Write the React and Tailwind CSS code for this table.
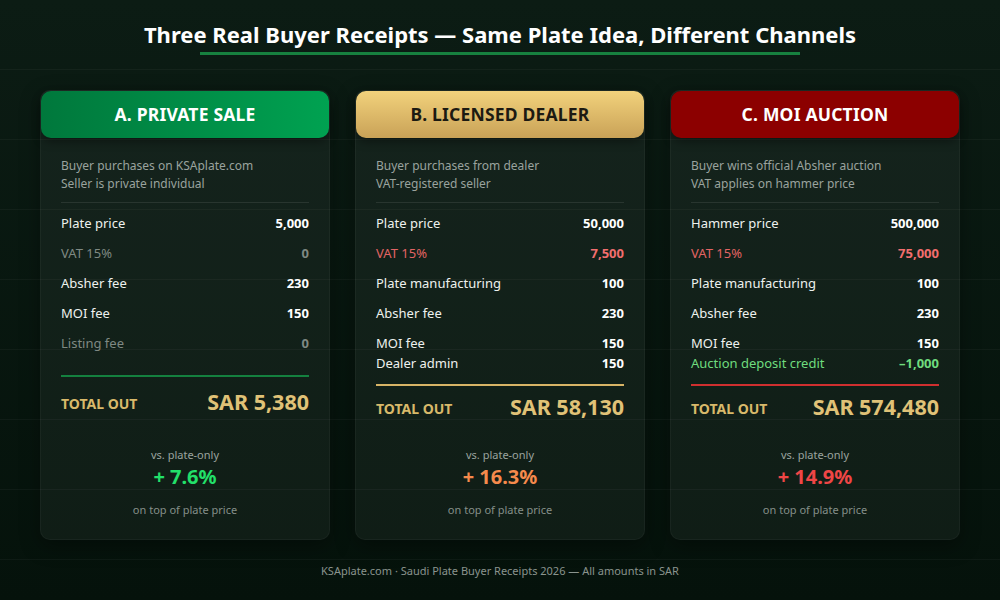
const cards = [
  {
    title: "A. PRIVATE SALE",
    head: "bg-linear-to-r from-[#00783c] to-[#00a251] text-white",
    desc: ["Buyer purchases on KSAplate.com", "Seller is private individual"],
    rows: [
      { label: "Plate price", value: "5,000" },
      { label: "VAT 15%", value: "0", tone: "muted" },
      { label: "Absher fee", value: "230" },
      { label: "MOI fee", value: "150" },
      { label: "Listing fee", value: "0", tone: "muted" },
    ],
    rule: "bg-[#14813f] mt-[16px]",
    totalGap: "mt-[9px]",
    total: "SAR 5,380",
    pct: "+ 7.6%",
    pctColor: "text-[#22e06a]",
  },
  {
    title: "B. LICENSED DEALER",
    head: "bg-linear-to-b from-[#f2d27c] to-[#c9a257] text-[#1c1a12]",
    desc: ["Buyer purchases from dealer", "VAT-registered seller"],
    rows: [
      { label: "Plate price", value: "50,000" },
      { label: "VAT 15%", value: "7,500", tone: "red" },
      { label: "Plate manufacturing", value: "100" },
      { label: "Absher fee", value: "230" },
      { label: "MOI fee", value: "150", tight: true, first: true },
      { label: "Dealer admin", value: "150", tight: true },
    ],
    rule: "bg-[#d7b466] mt-[10px]",
    totalGap: "mt-[5px]",
    total: "SAR 58,130",
    pct: "+ 16.3%",
    pctColor: "text-[#f58a4c]",
  },
  {
    title: "C. MOI AUCTION",
    head: "bg-[#8c0000] text-white",
    desc: ["Buyer wins official Absher auction", "VAT applies on hammer price"],
    rows: [
      { label: "Hammer price", value: "500,000" },
      { label: "VAT 15%", value: "75,000", tone: "red" },
      { label: "Plate manufacturing", value: "100" },
      { label: "Absher fee", value: "230" },
      { label: "MOI fee", value: "150", tight: true, first: true },
      { label: "Auction deposit credit", value: "–1,000", tone: "green", tight: true },
    ],
    rule: "bg-[#cf2f2f] mt-[10px]",
    totalGap: "mt-[5px]",
    total: "SAR 574,480",
    pct: "+ 14.9%",
    pctColor: "text-[#f04646]",
  },
];

const labelTone = {
  muted: "text-[#7f8983]",
  red: "text-[#e26464]",
  green: "text-[#6fdc7e]",
};

const valueTone = {
  muted: "text-[#7f8983]",
  red: "text-[#f26e6e]",
  green: "text-[#6fdc7e]",
};

function Row({ row }) {
  const h = row.tight ? "h-[20px]" : "h-[30px]";
  const mt = row.first ? "mt-[5px]" : "";
  return (
    <div className={`flex items-center justify-between text-[13px] ${h} ${mt}`}>
      <span className={labelTone[row.tone] || "text-[#eef1ee]"}>{row.label}</span>
      <span className={`font-bold ${valueTone[row.tone] || "text-white"}`}>{row.value}</span>
    </div>
  );
}

function Card({ c }) {
  return (
    <div className="flex flex-col w-[290px] h-[450px] rounded-[10px] bg-white/[0.045] border border-white/[0.04] shadow-[0_6px_20px_rgba(0,0,0,0.35)]">
      <div className={`h-[47px] shrink-0 flex items-center justify-center rounded-[10px] text-[17.5px] font-bold tracking-[0.2px] shadow-[0_4px_10px_rgba(0,0,0,0.35)] ${c.head}`}>
        {c.title}
      </div>
      <div className="flex flex-col flex-1 px-5 pt-[19px] pb-[21px]">
        <div className="text-[12px] leading-[18px] text-[#9aa39e]">
          <div>{c.desc[0]}</div>
          <div>{c.desc[1]}</div>
        </div>
        <div className="h-px bg-white/[0.09] mt-[9px] mb-[6px]" />
        {c.rows.map((r) => (
          <Row key={r.label} row={r} />
        ))}
        <div className={`h-[2px] ${c.rule}`} />
        <div className={`flex items-center justify-between h-[32px] ${c.totalGap}`}>
          <span className="text-[14px] font-bold text-[#d8b96a] mt-[3px]">TOTAL OUT</span>
          <span className="text-[21.5px] font-bold text-[#e0c277]">{c.total}</span>
        </div>
        <div className="mt-auto flex flex-col items-center">
          <div className="text-[11px] leading-[16px] text-[#9aa39e]">vs. plate-only</div>
          <div className={`text-[20px] leading-[24px] font-bold mt-[2px] ${c.pctColor}`}>{c.pct}</div>
          <div className="text-[11px] leading-[16px] text-[#858f89] mt-[13px]">on top of plate price</div>
        </div>
      </div>
    </div>
  );
}

export default function App() {
  return (
    <div
      className="w-[1000px] h-[600px] bg-linear-to-b from-[#0c1c14] to-[#05120b] overflow-hidden"
      style={{ fontFamily: '"Noto Sans", "Open Sans", sans-serif' }}
    >
      <div className="h-full flex flex-col bg-[linear-gradient(to_bottom,rgba(255,255,255,0.035)_1px,transparent_1px)] bg-[size:100%_70px] bg-[position:0_69px]">
        <div className="pt-[19px] flex flex-col items-center">
          <h1 className="text-[22px] leading-[30px] font-bold text-white">
            Three Real Buyer Receipts — Same Plate Idea, Different Channels
          </h1>
          <div className="w-[600px] h-[3px] bg-[#17813f] mt-[3px]" />
        </div>
        <div className="flex gap-[25px] px-10 mt-[35px]">
          {cards.map((c) => (
            <Card key={c.title} c={c} />
          ))}
        </div>
        <div className="mt-[23px] text-center text-[11px] leading-[16px] text-[#8a948e]">
          KSAplate.com · Saudi Plate Buyer Receipts 2026 — All amounts in SAR
        </div>
      </div>
    </div>
  );
}
